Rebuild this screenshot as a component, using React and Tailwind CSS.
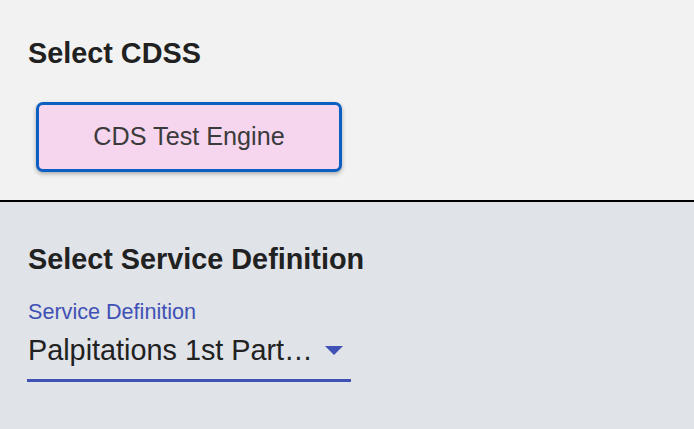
export default function App() {
  return (
    <div className="w-[694px] h-[429px] flex flex-col font-['Liberation_Sans',Arial,sans-serif] overflow-hidden">
      {/* CDSS picker */}
      <section className="h-[200px] bg-[#f2f2f2] pl-[28px] pt-[39px] flex-shrink-0">
        <h2 className="text-[28.8px] leading-none font-bold text-[#212121]">Select CDSS</h2>
        <div className="mt-[34px] ml-[8px]">
          <button className="w-[306px] h-[70px] border-[3px] border-[#0b5fc1] rounded-[7px] bg-[#f6d5ef] text-[25.2px] text-[#3b3b3b] shadow-[0_2px_4px_rgba(0,0,0,0.3)]">
            CDS Test Engine
          </button>
        </div>
      </section>

      <div className="h-[2px] bg-black flex-shrink-0" />

      {/* Service definition */}
      <section className="flex-1 bg-[#e0e3e8] pl-[28px] pt-[43px]">
        <h2 className="text-[28.8px] leading-none font-bold text-[#212121]">Select Service Definition</h2>
        <div className="mt-[27px] text-[21.6px] leading-none text-[#3f51b5]">Service Definition</div>
        <div className="mt-[14px] -ml-[1px] w-[324px] pl-[1px] pr-[8px] pb-[14px] border-b-[3px] border-[#3f51b5] flex items-center justify-between">
          <span className="whitespace-nowrap text-[28.8px] leading-none text-[#212121]">
            Palpitations 1st Part…
          </span>
          <svg width="18" height="9" viewBox="0 0 18 9">
            <polygon points="0,0 18,0 9,9" fill="#3f51b5" />
          </svg>
        </div>
      </section>
    </div>
  );
}
